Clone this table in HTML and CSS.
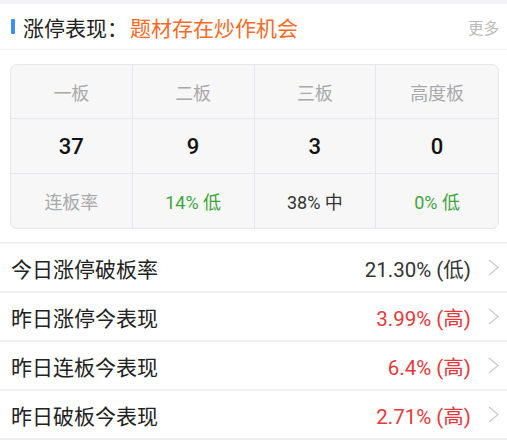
FILE: index.html
```html
<!DOCTYPE html>
<html lang="zh">
<head>
<meta charset="utf-8">
<link rel="stylesheet" href="styles.css">
</head>
<body>
<div class="topband"></div>
<div class="header">
  <span class="bar"></span>
  <span class="title">涨停表现：</span>
  <span class="subtitle">题材存在炒作机会</span>
  <span class="more">更多</span>
</div>
<div class="cardwrap">
  <div class="card">
    <div class="cell head">一板</div>
    <div class="cell head">二板</div>
    <div class="cell head">三板</div>
    <div class="cell head">高度板</div>
    <div class="cell num">37</div>
    <div class="cell num">9</div>
    <div class="cell num">3</div>
    <div class="cell num">0</div>
    <div class="cell head rate">连板率</div>
    <div class="cell pct green">14% 低</div>
    <div class="cell pct dark">38% 中</div>
    <div class="cell pct green">0% 低</div>
  </div>
</div>
<div class="list">
  <div class="row"><span class="label">今日涨停破板率</span><span class="val dark">21.30% (低)</span><svg class="chev" viewBox="0 0 11 17"><polyline points="1,1 10,8.5 1,16"/></svg></div>
  <div class="row"><span class="label">昨日涨停今表现</span><span class="val red">3.99% (高)</span><svg class="chev" viewBox="0 0 11 17"><polyline points="1,1 10,8.5 1,16"/></svg></div>
  <div class="row"><span class="label">昨日连板今表现</span><span class="val red">6.4% (高)</span><svg class="chev" viewBox="0 0 11 17"><polyline points="1,1 10,8.5 1,16"/></svg></div>
  <div class="row"><span class="label">昨日破板今表现</span><span class="val red">2.71% (高)</span><svg class="chev" viewBox="0 0 11 17"><polyline points="1,1 10,8.5 1,16"/></svg></div>
</div>
</body>
</html>
```

FILE: styles.css
```css
* { box-sizing: border-box; }
html, body { margin: 0; padding: 0; background: #fff; }
body {
  font-family: Roboto, "Noto Sans CJK SC", sans-serif;
  width: 507px;
  overflow: hidden;
}
.topband { height: 4px; background: #f2f2f4; }
.header {
  height: 46px;
  display: flex;
  align-items: center;
  padding: 0 8px 0 11px;
  border-bottom: 1px solid #efeff1;
}
.bar {
  width: 4px;
  height: 15px;
  background: #3a8cff;
  border-radius: 1px;
  margin-right: 8px;
}
.title { font-size: 21px; color: #222; }
.subtitle { font-size: 21px; color: #f76a26; margin-left: 2px; }
.more { margin-left: auto; font-size: 15.5px; color: #bbb; }
.cardwrap { padding: 14px 8px 13px 10px; }
.card {
  display: grid;
  grid-template-columns: repeat(4, 1fr);
  grid-template-rows: 54px 55px 54px;
  background: #f7f7f8;
  border: 1px solid #e8e8ec;
  border-radius: 7px;
  overflow: hidden;
}
.cell {
  display: flex;
  align-items: center;
  justify-content: center;
  border-right: 1px solid #e6e6ec;
  border-bottom: 1px solid #e6e6ec;
}
.cell:nth-child(4n) { border-right: none; }
.cell:nth-child(n+9) { border-bottom: none; }
.head { font-size: 18px; color: #a9a9a9; }
.num { font-size: 22px; font-weight: 500; color: #111; }
.pct { font-size: 18px; }
.green { color: #3ea53b; }
.dark { color: #333; }
.red { color: #e5383b; }
.list { border-top: 2px solid #f2f2f4; }
.row {
  height: 49px;
  display: flex;
  align-items: center;
  padding: 0 8px 0 11px;
  border-bottom: 2px solid #f0f0f2;
}
.label { font-size: 21px; color: #222; }
.val { margin-left: auto; font-size: 20.5px; }
.val.dark { color: #333; }
.chev {
  width: 11px;
  height: 17px;
  margin-left: 17px;
  fill: none;
  stroke: #c9c9c9;
  stroke-width: 1.2;
}
```
